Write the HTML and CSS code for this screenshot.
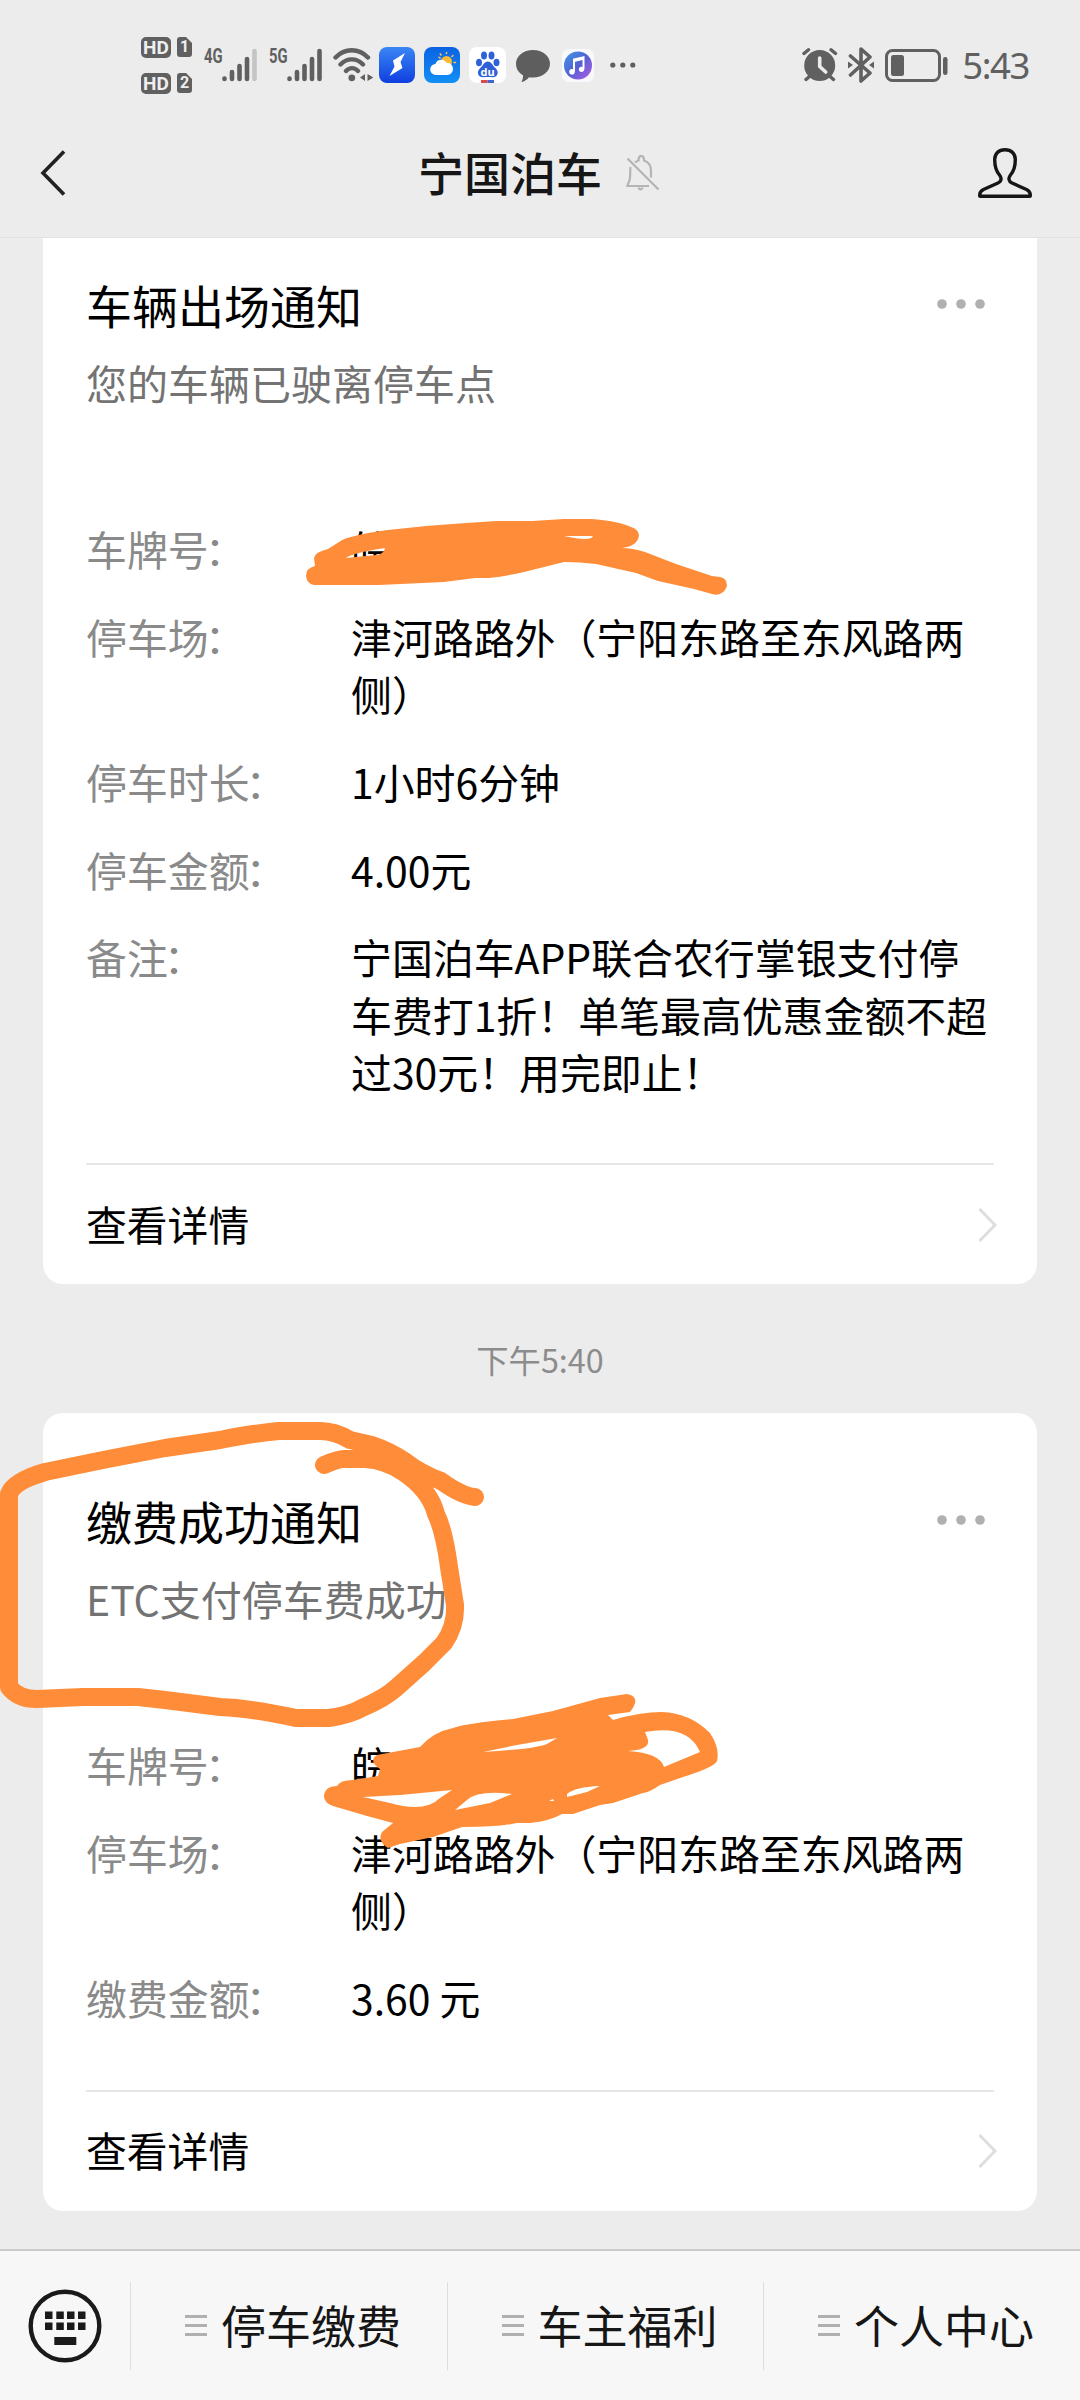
FILE: index.html
```html
<!DOCTYPE html>
<html lang="zh-CN">
<head>
<meta charset="utf-8">
<title>宁国泊车</title>
<link rel="stylesheet" href="styles.css">
</head>
<body>
<div class="screen">
  <header class="top">
    <div class="status">
      <div class="status-left">
        <div class="sims">
          <div class="sim-row"><span class="hd">HD</span><span class="sim">1</span></div>
          <div class="sim-row"><span class="hd">HD</span><span class="sim">2</span></div>
        </div>
        <div class="signal">
          <span class="net">4G</span>
          <svg width="35" height="34" viewBox="0 0 35 34" stroke="#606060" stroke-width="4.6" stroke-linecap="round"><path d="M2.5 30.5v.5M10 24v7M17.500 18v13M25 11v20"/><path d="M32.500 3v28" stroke="#c4c4c4"/></svg>
        </div>
        <div class="signal">
          <span class="net">5G</span>
          <svg width="35" height="34" viewBox="0 0 35 34" stroke="#606060" stroke-width="4.600" stroke-linecap="round"><path d="M2.500 30.500v.5M10 24v7M17.500 18v13M25 11v20M32.500 3v28"/></svg>
        </div>
        <svg class="wifi" width="40" height="34" viewBox="0 0 40 34" fill="none" stroke="#606060" stroke-width="4.400" stroke-linecap="round"><path d="M2.500 9.500C11.500-.2 26-.2 35 9.500M7.500 16.500c6.500-6.800 16-6.800 22.500 0M13 23c3.500-3.800 8.500-3.800 12 0"/><circle cx="18.800" cy="29.800" r="3.400" fill="#606060" stroke="none"/><path d="M27 29.500l5-3.500v7zM34.500 26v7l6-3.500z" fill="#606060" stroke="none"/></svg>
        <svg class="app-flash" width="36" height="36" viewBox="0 0 36 36"><defs><linearGradient id="flash" x1="0" y1="0" x2="0" y2="1"><stop offset="0" stop-color="#3a86f4"/><stop offset="1" stop-color="#0f3fe0"/></linearGradient></defs><rect width="36" height="36" rx="8" fill="url(#flash)"/><path d="M26 6L14 13.500l1.500 6L10.500 29l13-8-2-6z" fill="#fff"/></svg>
        <svg class="app-weather" width="36" height="36" viewBox="0 0 36 36"><defs><linearGradient id="sky" x1="0" y1="0" x2="0" y2="1"><stop offset="0" stop-color="#0b62e2"/><stop offset="1" stop-color="#1290f6"/></linearGradient></defs><rect width="36" height="36" rx="8" fill="url(#sky)"/><circle cx="22.500" cy="14.500" r="5.500" fill="#f6bb38"/><path d="M22.500 6.500v-1M17 8l-.8-1.200M28 9.500l1-1M30 15.500h1.500M16 11l-1-.6" stroke="#f6c85c" stroke-width="1.500" stroke-linecap="round"/><path d="M12 28a5.500 5.500 0 0 1-.6-11c1.500-5.300 8.500-5.800 11-1.200 3.500-.5 6.600 2.500 6.600 6 0 3.400-2.600 6.200-6 6.200z" fill="#fff"/></svg>
        <svg class="app-baidu" width="37" height="36" viewBox="0 0 37 36"><rect width="37" height="36" rx="8" fill="#fff"/><g fill="#3060d8"><ellipse cx="15" cy="8.500" rx="3" ry="4"/><ellipse cx="22.500" cy="8.500" rx="3" ry="4"/><ellipse cx="10" cy="15.500" rx="3" ry="3.800"/><ellipse cx="27.500" cy="15.500" rx="3" ry="3.800"/><path d="M18.800 14.500c4 0 4.800 4.500 7.700 6.500 4.500 4.500 1.500 9.500-3 9.200-3-.3-6-.3-9 0-5 .3-8-5-3-9.500 2.800-2 3.500-6.200 7.300-6.200z"/></g><text class="du" x="18.600" y="28.500" text-anchor="middle">du</text><path d="M12 33h6.500v3H12z" fill="#d84a4a"/><path d="M18.500 33H25v3h-6.500z" fill="#4464c8"/></svg>
        <svg class="bubble" width="34" height="32" viewBox="0 0 34 32"><path d="M17 0c9.500 0 17 6 17 13.800S26.500 27.500 17 27.500c-1.500 0-3 0-4-.3C11 29.500 8.500 31.500 5.500 32c1-2 1.700-4.500 1.500-6.700C2.500 22.800 0 18.800 0 13.800 0 6 7.500 0 17 0z" fill="#5e5e5e"/></svg>
        <svg class="app-music" width="32" height="33" viewBox="0 0 32 33"><defs><linearGradient id="disc" x1="0" y1="0" x2="1" y2="1"><stop offset="0" stop-color="#3c9be8"/><stop offset=".5" stop-color="#5560d2"/><stop offset="1" stop-color="#b45ee8"/></linearGradient></defs><rect width="32" height="33" rx="7" fill="#f9f9fd"/><circle cx="16" cy="16.500" r="14" fill="url(#disc)"/><path d="M12 22.500V10.500l9.500-2.200v11.900" fill="none" stroke="#fff" stroke-width="2"/><path d="M12 10l9.500-2.200v3L12 13z" fill="#fff"/><circle cx="10" cy="22.800" r="2.800" fill="#fff"/><circle cx="19.500" cy="20.300" r="2.600" fill="#fff"/></svg>
        <svg class="more-apps" width="26" height="6" viewBox="0 0 26 6" fill="#5e5e5e"><circle cx="2.800" cy="3" r="2.600"/><circle cx="12.800" cy="3" r="2.600"/><circle cx="22.800" cy="3" r="2.600"/></svg>
      </div>
      <div class="status-right">
        <svg width="36" height="34" viewBox="0 0 36 34"><circle cx="17.700" cy="17.500" r="15.500" fill="#606060"/><path d="M17.700 10v8.500l6 5.500" fill="none" stroke="#ececec" stroke-width="3.600" stroke-linecap="round" stroke-linejoin="round"/><path d="M2 5.500L6.500 1.800M29 1.800l4.500 3.700M4 31.500l4-3.500M31.500 31.500l-4-3.500" stroke="#606060" stroke-width="3.400" stroke-linecap="round"/></svg>
        <svg class="bluetooth" width="26" height="36" viewBox="0 0 26 36" fill="none" stroke="#606060" stroke-width="3.600" stroke-linejoin="round" stroke-linecap="round"><path d="M2.500 9l19.500 17-9 8V2l9 8L2.500 28"/><path d="M0 14.500l5 3.500-5 3.500zM26 14.500L21 18l5 3.500z" fill="#606060" stroke="none"/></svg>
        <svg class="battery" width="63" height="33" viewBox="0 0 63 33"><rect x="1.500" y="1.500" width="53" height="30" rx="6" fill="none" stroke="#606060" stroke-width="3"/><rect x="6" y="6" width="13" height="21" rx="2.500" fill="#606060"/><rect x="58" y="8" width="4.500" height="18" rx="2.200" fill="#606060"/></svg>
        <span class="clock">5:43</span>
      </div>
    </div>
    <nav class="nav">
      <svg class="back" width="26" height="46" viewBox="0 0 26 46" fill="none" stroke="#222" stroke-width="3.600"><path d="M24 1.500L3 23l21 21.500"/></svg>
      <div class="nav-title">
        <h1>宁国泊车</h1>
        <svg width="34" height="36" viewBox="0 0 34 36" fill="none" stroke="#b4b4b4" stroke-width="2.200"><path d="M9 7.500c1.200-1 2.300-1.600 3.500-2C12.500-.5 18-.5 18 5.500 22.500 7 25 11 25 16v6.500M4.500 12c-.5 3 0 7.500-.6 11.500-.4 3-1.700 4.500-2.600 7.500H23M12.500 32.500c.7 2.500 3.300 2.500 4 0M1.500 3.500l31 31"/></svg>
      </div>
      <svg class="person" width="54" height="50" viewBox="0 0 54 50" fill="none" stroke="#161616" stroke-width="3.400" stroke-linejoin="round"><path d="M27 1.700C20.500 1.700 16.700 6 16.700 11.500c0 7 1.300 11.500 4.800 15.500 2.500 3 2 6.500-1.500 8L5.500 41.500C2.800 42.800 1.700 44.500 1.700 47v.5c0 .5.300.8.800.8h49c.5 0 .8-.3.800-.8V47c0-2.500-1.100-4.200-3.800-5.500L34 35c-3.500-1.500-4-5-1.500-8 3.500-4 4.800-8.500 4.800-15.500C37.300 6 33.500 1.700 27 1.700z"/></svg>
    </nav>
  </header>

  <main class="chat">
    <section class="card card-cut">
      <div class="card-head">
        <h2>车辆出场通知</h2>
        <svg class="dots" width="48" height="10" viewBox="0 0 48 10" fill="#b0b0b0"><circle cx="5" cy="5" r="4.800"/><circle cx="24" cy="5" r="4.800"/><circle cx="43" cy="5" r="4.800"/></svg>
      </div>
      <p class="sub">您的车辆已驶离停车点</p>
      <dl class="rows">
        <div class="row"><dt>车牌号<span class="colon">：</span></dt><dd>皖</dd></div>
        <div class="row"><dt>停车场<span class="colon">：</span></dt><dd>津河路路外（宁阳东路至东风路两侧）</dd></div>
        <div class="row"><dt>停车时长<span class="colon">：</span></dt><dd>1小时6分钟</dd></div>
        <div class="row"><dt>停车金额<span class="colon">：</span></dt><dd>4.00元</dd></div>
        <div class="row"><dt>备注<span class="colon">：</span></dt><dd>宁国泊车APP联合农行掌银支付停车费打1折！单笔最高优惠金额不超过30元！用完即止！</dd></div>
      </dl>
      <div class="detail"><span>查看详情</span><svg width="19" height="34" viewBox="0 0 19 34" fill="none" stroke="#dedede" stroke-width="3"><path d="M1.500 1L17 17 1.500 33"/></svg></div>
    </section>

    <time class="stamp">下午5:40</time>

    <section class="card">
      <div class="card-head">
        <h2>缴费成功通知</h2>
        <svg class="dots" width="48" height="10" viewBox="0 0 48 10" fill="#b0b0b0"><circle cx="5" cy="5" r="4.800"/><circle cx="24" cy="5" r="4.800"/><circle cx="43" cy="5" r="4.800"/></svg>
      </div>
      <p class="sub">ETC支付停车费成功</p>
      <dl class="rows">
        <div class="row"><dt>车牌号<span class="colon">：</span></dt><dd>皖</dd></div>
        <div class="row"><dt>停车场<span class="colon">：</span></dt><dd>津河路路外（宁阳东路至东风路两侧）</dd></div>
        <div class="row"><dt>缴费金额<span class="colon">：</span></dt><dd>3.60 元</dd></div>
      </dl>
      <div class="detail"><span>查看详情</span><svg width="19" height="34" viewBox="0 0 19 34" fill="none" stroke="#dedede" stroke-width="3"><path d="M1.500 1L17 17 1.500 33"/></svg></div>
    </section>
  </main>

  <footer class="menu">
    <div class="keyboard">
      <svg width="74" height="74" viewBox="0 0 74 74"><circle cx="37" cy="37" r="34.300" fill="none" stroke="#1a1a1a" stroke-width="4.400"/><path d="M17 22.500h7.500v7.500H17zM28.300 22.500h7.500v7.500h-7.500zM39 22.500h7.500v7.500H39zM50 22.500h7.500v7.500H50zM17 33.500h7.500V41H17zM28.300 33.500h7.500V41h-7.500zM39 33.500h7.500V41H39zM50 33.500h7.500V41H50zM26.300 48h22v8h-22z" fill="#1a1a1a"/></svg>
    </div>
    <div class="menu-item"><i class="bars"></i><span>停车缴费</span></div>
    <div class="menu-item"><i class="bars"></i><span>车主福利</span></div>
    <div class="menu-item"><i class="bars"></i><span>个人中心</span></div>
  </footer>

  <svg class="ink" width="1080" height="2400" viewBox="0 0 1080 2400" fill="#ff8c38" fill-rule="evenodd">
    <path d="M306 576Q307 584 314 585L379 585L444 582L475 578L489 578Q508 576 524 572L564 562Q580 562 596 564L636 573L658 581L694 589L712 594Q723 597 727 586Q727 578 720 577L712 576L676 564L645 552Q632 548 622 548Q638 546 639 535Q638 529 631 527Q618 521 591 519L564 519L533 521L497 521L466 523L426 526L388 530Q365 533 355 536Q344 538 339 542L328 549Q315 552 314 558L315 566Q306 568 306 576ZM346 558Q352 553 385 548Q384 554 376 555ZM564 536L593 536Q591 542 564 536Z"/>
    <path d="M324 1796Q325 1786 337 1786Q340 1780 353 1780L378 1776L380 1769Q368 1761 377 1755L420 1747Q433 1732 453 1728Q468 1723 513 1719L553 1711L600 1698L627 1694Q642 1697 630 1712L608 1715L613 1720Q640 1712 662 1712Q690 1713 710 1733Q720 1748 717 1761Q715 1767 683 1777L660 1785Q650 1792 643 1793L613 1803L600 1805L573 1814L562 1814Q550 1821 530 1823L517 1823Q500 1827 462 1827L433 1837L400 1844L388 1848Q377 1841 382 1832L393 1823L367 1816L333 1806Q324 1803 324 1796ZM483 1752L517 1745L557 1738L547 1744Q535 1749 483 1752ZM363 1797L400 1795L452 1790L440 1798Q425 1813 390 1803ZM455 1810L467 1800Q478 1790 512 1794L490 1803ZM567 1794Q575 1787 600 1786L587 1792L567 1797ZM645 1732Q688 1724 700 1752L664 1767Q660 1753 628 1751Q650 1750 648 1740ZM549 1801L553 1799L554 1801Z"/>
    <path class="ring" d="M475 1497Q462 1496 441 1481Q420 1473 406 1462Q390 1451 372 1445L350 1440Q335 1431 320 1431L279 1431Q255 1433 220 1440L165 1448L103 1460L45 1472Q14 1481 9 1494L9 1687Q18 1699 37 1699L83 1697L138 1697L165 1700L220 1707Q250 1708 296 1718L329 1718Q350 1715 362 1708Q385 1698 396 1688L424 1663L444 1643Q456 1626 455 1605L449 1567Q444 1530 436 1514Q430 1490 403 1472Q385 1460 365 1459L344 1459Q338 1459 324 1465"/>
  </svg>
</div>
</body>
</html>
```
FILE: styles.css
```css
* { box-sizing: border-box; }
body {
  margin: 0;
  background: #ececec;
  font-family: "Noto Sans CJK SC", "Noto Sans", sans-serif;
  color: #000;
}
h1, h2, p, dl, dd { margin: 0; font-weight: 400; }
svg { display: block; flex: none; }

.screen {
  position: relative;
  width: 1080px;
  height: 2400px;
  overflow: hidden;
  display: flex;
  flex-direction: column;
}

/* status bar and title */
.top { height: 237px; flex: none; }
.status {
  height: 130px;
  padding: 0 50px 0 141px;
  display: flex;
  justify-content: space-between;
}
.status-left, .status-right { display: flex; align-items: center; }
.sims { display: flex; flex-direction: column; gap: 15px; width: 51px; }
.sim-row { display: flex; justify-content: space-between; align-items: center; }
.hd, .sim {
  height: 21px;
  line-height: 21px;
  background: #606060;
  color: #efefef;
  font-family: Roboto, sans-serif;
  font-weight: 700;
  text-align: center;
}
.hd { width: 30px; border-radius: 5px; font-size: 19px; }
.sim {
  width: 15px;
  height: 20px;
  line-height: 20px;
  font-size: 16px;
  border-radius: 3px;
  clip-path: polygon(0 0, 60% 0, 100% 30%, 100% 100%, 0 100%);
}
.signal { display: flex; width: 53px; height: 34px; margin-left: 12px; }
.net {
  width: 18px;
  flex: none;
  font: 700 20px/16px Roboto, sans-serif;
  transform: scaleX(0.74);
  transform-origin: left;
  height: 16px;
  color: #606060;
}
.wifi { margin-left: 11px; }
.app-flash { margin-left: 6px; }
.app-weather, .app-baidu { margin-left: 9px; }
.bubble { margin: 2px 0 0 10px; }
.app-music { margin-left: 12px; }
.more-apps { margin-left: 16px; }
.du { font: 700 11px "Open Sans", sans-serif; fill: #fff; }
.bluetooth { margin-left: 10px; }
.battery { margin-left: 11px; }
.clock {
  margin-left: 14px;
  font: 400 36.500px/40px "Noto Sans", sans-serif;
  letter-spacing: -1.400px;
  color: #606060;
}
.status-right { padding-right: 1px; }

.nav {
  height: 108px;
  padding: 0 48px 22px 40px;
  display: flex;
  justify-content: space-between;
  align-items: center;
}
.nav-title { display: flex; align-items: center; gap: 24px; margin-left: 34px; }
.nav-title h1 { font-size: 46px; line-height: 60px; padding-bottom: 4px; font-weight: 500; color: #161616; }

/* messages */
.chat {
  flex: 1;
  padding: 0 43px;
  border-top: 1px solid #e2e2e2;
}
.card {
  background: #fff;
  border-radius: 20px;
  padding: 77px 43px 0;
}
.card-cut { border-radius: 0 0 20px 20px; padding-top: 36px; }
.card-head { display: flex; justify-content: space-between; align-items: center; padding-right: 9px; }
.card-head h2 { font-size: 46px; line-height: 60px; }
.sub { margin-top: 20px; font-size: 41px; line-height: 57px; color: #737373; }
.rows { margin-top: 109px; display: flex; flex-direction: column; gap: 30.500px; }
.row { display: flex; font-size: 40.900px; line-height: 57.300px; }
dt { width: 265px; flex: none; color: #8a8a8a; }
dd { flex: 1; min-width: 0; }
.colon { margin-left: -4px; }
.detail {
  margin-top: 63px;
  height: 121px;
  border-top: 2px solid #e6e6e6;
  display: flex;
  justify-content: space-between;
  align-items: center;
  font-size: 40.800px;
}
.detail span { padding-bottom: 3px; }
.detail svg { margin-right: -3px; }
.stamp {
  display: block;
  height: 129px;
  line-height: 150px;
  text-align: center;
  font-size: 32.300px;
  color: #8c8c8c;
}

/* bottom menu */
.menu {
  height: 151px;
  flex: none;
  display: flex;
  align-items: center;
  background: #f7f7f7;
  border-top: 2px solid #cbcbcb;
}
.keyboard { width: 130px; padding-left: 28px; }
.menu-item {
  width: 316.500px;
  height: 88px;
  padding-left: 54px;
  border-left: 1px solid #dedede;
  display: flex;
  align-items: center;
  gap: 14px;
  font-size: 45px;
  color: #161616;
}
.menu-item span { padding-bottom: 3px; }
.bars {
  width: 22px;
  height: 21px;
  background: repeating-linear-gradient(#b0b0b0 0 3px, transparent 3px 9px);
}

/* hand-drawn marks over the conversation */
.ink { position: absolute; left: 0; top: 0; pointer-events: none; }
.ring {
  fill: none;
  stroke: #ff8c38;
  stroke-width: 18px;
  stroke-linecap: round;
  stroke-linejoin: round;
}
```
